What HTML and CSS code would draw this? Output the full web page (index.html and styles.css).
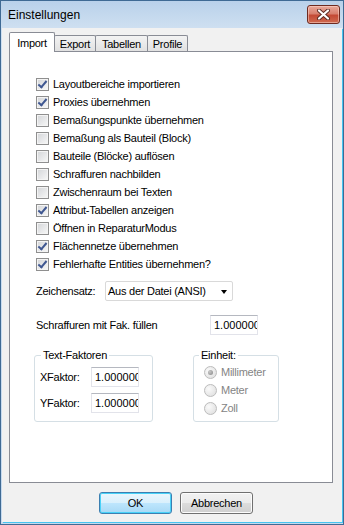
FILE: index.html
```html
<!DOCTYPE html>
<html lang="de">
  <head>
    <meta charset="utf-8">
    <title>Einstellungen</title>
    <link rel="stylesheet" href="styles.css">
  </head>
  <body>
    <div class="window">
      <!-- title bar -->
      <div class="titlebar">
        <span class="title">Einstellungen</span>
        <div class="close">
          <svg width="15" height="11" viewBox="0 0 15 11">
            <path d="M3 1.5 L12 9.5 M12 1.5 L3 9.5" stroke="#5a2a22" stroke-width="4" stroke-linecap="round"/>
            <path d="M3 1.5 L12 9.5 M12 1.5 L3 9.5" stroke="#ffffff" stroke-width="2.2" stroke-linecap="round"/>
          </svg>
        </div>
      </div>

      <div class="client">
        <div class="tabs">
          <div class="tab active">Import</div>
          <div class="tab t-export">Export</div>
          <div class="tab t-tables">Tabellen</div>
          <div class="tab t-profile">Profile</div>
        </div>

        <div class="panel">
          <div class="checks">
            <div class="check on"><span class="box"></span>Layoutbereiche importieren</div>
            <div class="check on"><span class="box"></span>Proxies übernehmen</div>
            <div class="check"><span class="box"></span>Bemaßungspunkte übernehmen</div>
            <div class="check"><span class="box"></span>Bemaßung als Bauteil (Block)</div>
            <div class="check"><span class="box"></span>Bauteile (Blöcke) auflösen</div>
            <div class="check"><span class="box"></span>Schraffuren nachbilden</div>
            <div class="check"><span class="box"></span>Zwischenraum bei Texten</div>
            <div class="check on"><span class="box"></span>Attribut-Tabellen anzeigen</div>
            <div class="check"><span class="box"></span>Öffnen in ReparaturModus</div>
            <div class="check on"><span class="box"></span>Flächennetze übernehmen</div>
            <div class="check on"><span class="box"></span>Fehlerhafte Entities übernehmen?</div>
          </div>

          <div class="row charset">
            <span class="lbl">Zeichensatz:</span>
            <div class="select">Aus der Datei (ANSI)<span class="arrow"></span></div>
          </div>

          <div class="row hatch">
            <span class="lbl">Schraffuren mit Fak. füllen</span>
            <input class="field" type="text" value="1.000000" readonly>
          </div>

          <div class="groups">
            <fieldset class="group factors">
              <legend>Text-Faktoren</legend>
              <div class="frow"><span class="lbl">XFaktor:</span><input class="field" type="text" value="1.000000" readonly></div>
              <div class="frow"><span class="lbl">YFaktor:</span><input class="field" type="text" value="1.000000" readonly></div>
            </fieldset>
            <fieldset class="group units">
              <legend>Einheit:</legend>
              <div class="radio on"><span class="dot"></span>Millimeter</div>
              <div class="radio"><span class="dot"></span>Meter</div>
              <div class="radio"><span class="dot"></span>Zoll</div>
            </fieldset>
          </div>
        </div>

        <div class="buttons">
          <div class="btn default">OK</div>
          <div class="btn">Abbrechen</div>
        </div>
      </div>
    </div>
  </body>
</html>
```

FILE: styles.css
```css
* {
  margin: 0;
  padding: 0;
  box-sizing: border-box;
}

body {
  width: 344px;
  height: 525px;
  overflow: hidden;
  font-family: 'Liberation Sans', Arial, sans-serif;
  font-size: 11px;
  letter-spacing: -0.25px;
  color: #000;
}

/* window frame */
.window {
  width: 344px;
  height: 525px;
  display: flex;
  flex-direction: column;
  background: linear-gradient(to bottom, #b9d1ea 0, #cfe0f1 28px, #c5daef 100%);
  border: 1px solid #3f6a94;
}

.titlebar {
  height: 27px;
  display: flex;
  align-items: center;
  justify-content: space-between;
  padding: 0 3px 0 7px;
}

.title {
  font-size: 12px;
  letter-spacing: 0;
  color: #000;
}

.close {
  width: 33px;
  height: 19px;
  border: 1px solid #6e2a20;
  border-radius: 3px;
  background: linear-gradient(to bottom, #e9a99b 0, #d8806e 45%, #c44a35 55%, #cf6a4f 100%);
  box-shadow: inset 0 0 0 1px rgba(255, 220, 210, 0.5);
  display: flex;
  align-items: center;
  justify-content: center;
}

/* dialog client area */
.client {
  flex: 1;
  margin: 0 1px 2px 1px;
  padding: 4px 0 0 7px;
  background: #f1f1f1;
  box-shadow: 1px 1px 0 #46c4f0;
  display: flex;
  flex-direction: column;
}

/* tabs */
.tabs {
  display: flex;
  align-items: flex-end;
  height: 20px;
  margin-bottom: -1px;
  position: relative;
  z-index: 1;
}

.tab {
  height: 16px;
  margin-bottom: 1px;
  margin-left: -1px;
  border: 1px solid #898c95;
  border-bottom: none;
  border-radius: 2px 2px 0 0;
  background: linear-gradient(to bottom, #f3f3f3, #e1e1e1);
  display: flex;
  align-items: center;
  justify-content: center;
}

.tab.active {
  height: 20px;
  margin-bottom: 0;
  margin-left: 0;
  width: 46px;
  background: #fff;
  position: relative;
  z-index: 2;
}

.t-export { width: 42px; }
.t-tables { width: 53px; }
.t-profile { width: 41px; }

.panel {
  width: 324px;
  height: 432px;
  border: 1px solid #898c95;
  background: #fff;
  padding: 23px 0 0 26px;
}

/* checkboxes */
.check {
  height: 18px;
  display: flex;
  align-items: center;
  gap: 4px;
}

.box {
  width: 13px;
  height: 13px;
  border: 1px solid #8f8f8f;
  background: linear-gradient(135deg, #d3d5d8, #f8f8f8);
  box-shadow: inset 0 0 0 1px #f4f4f4;
  position: relative;
}

.check.on .box::after {
  content: "";
  position: absolute;
  left: 3px;
  top: 0px;
  width: 3px;
  height: 7px;
  border: solid #3f5791;
  border-width: 0 2px 2px 0;
  transform: rotate(40deg);
}

/* rows */
.row {
  height: 20px;
  display: flex;
  align-items: center;
}

.charset { margin-top: 8px; }
.charset .lbl { width: 69px; }

.select {
  width: 128px;
  height: 20px;
  border: 1px solid #d9d9d9;
  border-radius: 2px;
  background: #fff;
  padding-left: 2px;
  display: flex;
  align-items: center;
  position: relative;
}

.arrow {
  position: absolute;
  right: 5px;
  top: 8px;
  border-left: 3.5px solid transparent;
  border-right: 3.5px solid transparent;
  border-top: 4px solid #000;
}

.hatch { margin-top: 14px; }
.hatch .lbl { width: 174px; }

.field {
  width: 48px;
  height: 20px;
  border: 1px solid #e2e3ea;
  border-top-color: #b5b8c0;
  background: #fff;
  padding: 0 0 0 3px;
  font-family: 'Liberation Sans', Arial, sans-serif;
  font-size: 11px;
  letter-spacing: 0;
  color: #000;
  outline: none;
}

/* group boxes */
.groups {
  display: flex;
  margin: 14px 0 0 -2px;
  gap: 40px;
}

.group {
  border: 1px solid #d5dfe5;
  border-radius: 3px;
  min-width: 0;
}

.group legend {
  line-height: 13px;
  padding: 0 2px;
}

.factors {
  width: 119px;
  padding: 5px 0 8px 5px;
}

.factors legend { margin-left: 1px; }

.frow {
  height: 20px;
  display: flex;
  align-items: center;
}

.frow + .frow { margin-top: 6px; }
.frow .lbl { width: 51px; }

.units {
  width: 86px;
  padding: 1px 0 4px 10px;
}

.units legend { margin-left: -5px; }

.radio {
  height: 18px;
  display: flex;
  align-items: center;
  gap: 4px;
  color: #848484;
}

.dot {
  width: 13px;
  height: 13px;
  border-radius: 50%;
  border: 1px solid #bcbcbc;
  background: radial-gradient(circle at 35% 35%, #fafafa, #dcdcdc);
  display: flex;
  align-items: center;
  justify-content: center;
}

.radio.on .dot::after {
  content: "";
  width: 5px;
  height: 5px;
  border-radius: 50%;
  background: radial-gradient(circle at 35% 35%, #c8c8c8, #868686);
}

/* dialog buttons */
.buttons {
  display: flex;
  gap: 8px;
  margin-top: 9px;
  padding-left: 90px;
}

.btn {
  width: 73px;
  height: 22px;
  border: 1px solid #707070;
  border-radius: 3px;
  background: linear-gradient(to bottom, #f2f2f2 0, #ebebeb 50%, #dddddd 50%, #cfcfcf 100%);
  box-shadow: inset 0 0 0 1px #fcfcfc;
  display: flex;
  align-items: center;
  justify-content: center;
}

.btn.default {
  border-color: #3c7fb1;
  background: linear-gradient(to bottom, #eaf6fd 0, #d9f0fc 50%, #bee6fd 50%, #a7d9f5 100%);
  box-shadow: inset 0 0 0 1px #48d2f8;
}
```
